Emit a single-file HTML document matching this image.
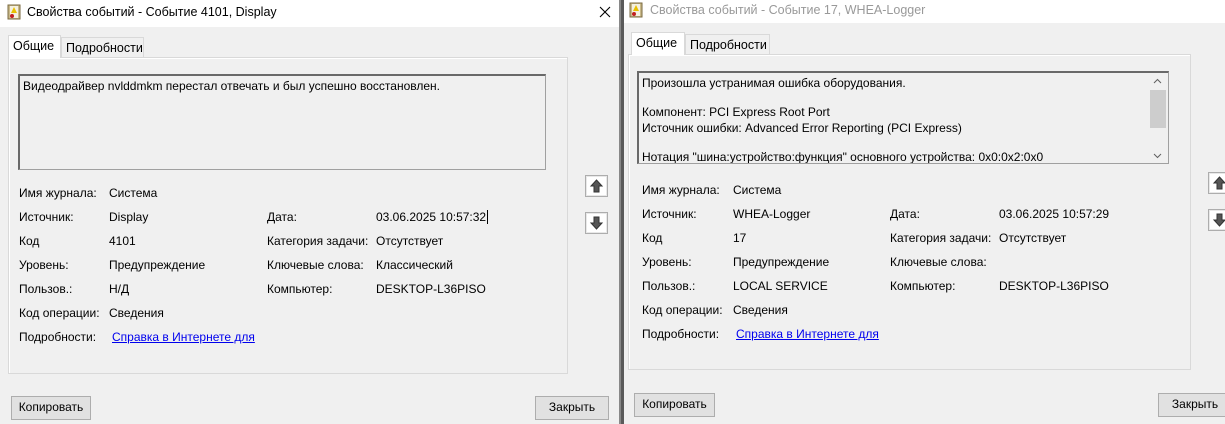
<!DOCTYPE html>
<html><head><meta charset="utf-8"><style>
*{margin:0;padding:0;box-sizing:border-box}
body{width:1225px;height:424px;overflow:hidden;background:#f0f0f0;position:relative;font-family:"Liberation Sans","DejaVu Sans",sans-serif;font-size:12px;color:#000}
.a{position:absolute;white-space:nowrap}
.tb{position:absolute;top:0;height:27px;background:#fff}
.tab{position:absolute;border:1px solid #d9d9d9;border-bottom:none;background:#f0f0f0;padding:3px 4px 0 4px;height:20px}
.tab.on{background:#fff;height:23px;z-index:2}
.panel{position:absolute;border:1px solid #d9d9d9;background:#f0f0f0;box-shadow:inset 1px 1px 0 #fff}
.box{position:absolute;border:1px solid #a0a0a0;border-top:2px solid #696969;border-left:2px solid #696969;background:#f0f0f0;padding:2px 3px;line-height:16px;overflow:hidden}
.btn{position:absolute;border:1px solid #adadad;background:#e1e1e1;text-align:center;line-height:20px}
.arr{position:absolute;width:23px;height:22px;border:1px solid #adadad;background:#fff;box-shadow:inset 0 0 0 1px #e8e8e8}
.link{color:#0000ee;text-decoration:underline}
.gap{height:13px}
</style></head><body>
<!-- left window -->
<div class="tb" style="left:0;width:619px"></div>
<svg class="a" style="left:7px;top:4px" width="14" height="16" viewBox="0 0 14 16"><rect x="1" y="1" width="12" height="14" fill="#c9b98a" stroke="#7a6a40"/><rect x="3" y="2" width="8" height="12" fill="#f4f0e0"/><path d="M7 3 L10 9 L4 9Z" fill="#e8c000"/><circle cx="5" cy="12" r="2" fill="#c02020"/></svg>
<div class="a" style="left:27px;top:5px;font-size:12.5px">Свойства событий - Событие 4101, Display</div>
<svg class="a" style="left:599px;top:6px" width="12" height="12"><path d="M1 1L11 11M11 1L1 11" stroke="#000" stroke-width="1.1"/></svg>
<div class="tab on" style="left:8px;top:35px;width:53px;font-size:12.5px">Общие</div>
<div class="tab" style="left:61px;top:37px;width:83px;font-size:12.5px">Подробности</div>
<div class="panel" style="left:8px;top:57px;width:560px;height:317px"></div>
<div class="box" style="left:18px;top:74px;width:528px;height:96px">Видеодрайвер nvlddmkm перестал отвечать и был успешно восстановлен.</div>
<div class="a" style="left:19px;top:186px">Имя журнала:</div><div class="a" style="left:109px;top:186px">Система</div>
<div class="a" style="left:19px;top:210px">Источник:</div><div class="a" style="left:109px;top:210px">Display</div>
<div class="a" style="left:267px;top:210px">Дата:</div><div class="a" style="left:376px;top:210px">03.06.2025 10:57:32<span style="border-left:1px solid #000;margin-left:1px"></span></div>
<div class="a" style="left:19px;top:234px">Код</div><div class="a" style="left:109px;top:234px">4101</div>
<div class="a" style="left:267px;top:234px">Категория задачи:</div><div class="a" style="left:376px;top:234px">Отсутствует</div>
<div class="a" style="left:19px;top:258px">Уровень:</div><div class="a" style="left:109px;top:258px">Предупреждение</div>
<div class="a" style="left:267px;top:258px">Ключевые слова:</div><div class="a" style="left:376px;top:258px">Классический</div>
<div class="a" style="left:19px;top:282px">Пользов.:</div><div class="a" style="left:109px;top:282px">Н/Д</div>
<div class="a" style="left:267px;top:282px">Компьютер:</div><div class="a" style="left:376px;top:282px">DESKTOP-L36PISO</div>
<div class="a" style="left:19px;top:306px">Код операции:</div><div class="a" style="left:109px;top:306px">Сведения</div>
<div class="a" style="left:19px;top:330px">Подробности:</div><div class="a link" style="left:112px;top:330px">Справка в Интернете для </div>
<div class="arr" style="left:585px;top:175px"><svg width="21" height="20"><path d="M10.5 4L16 10H13V16H8V10H5Z" fill="#555" stroke="#333"/></svg></div>
<div class="arr" style="left:585px;top:212px"><svg width="21" height="20"><path d="M10.5 16L16 10H13V4H8V10H5Z" fill="#555" stroke="#333"/></svg></div>
<div class="btn" style="left:11px;top:396px;width:80px;height:24px">Копировать</div>
<div class="btn" style="left:535px;top:396px;width:74px;height:24px">Закрыть</div>
<!-- divider -->
<div class="a" style="left:619px;top:0;width:2px;height:424px;background:#888"></div>
<div class="a" style="left:621px;top:0;width:3px;height:424px;background:#5a5a5a"></div>
<!-- right window -->
<div class="tb" style="left:624px;width:601px;height:23px"></div>
<svg class="a" style="left:629px;top:2px" width="14" height="16" viewBox="0 0 14 16"><rect x="1" y="1" width="12" height="14" fill="#c9b98a" stroke="#7a6a40"/><rect x="3" y="2" width="8" height="12" fill="#f4f0e0"/><path d="M7 3 L10 9 L4 9Z" fill="#e8c000"/><circle cx="5" cy="12" r="2" fill="#c02020"/></svg>
<div class="a" style="left:650px;top:3px;font-size:12.5px;color:#999">Свойства событий - Событие 17, WHEA-Logger</div>
<div class="tab on" style="left:631px;top:32px;width:54px;font-size:12.5px">Общие</div>
<div class="tab" style="left:685px;top:34px;width:85px;font-size:12.5px">Подробности</div>
<div class="panel" style="left:628px;top:54px;width:563px;height:316px"></div>
<div class="box" style="left:637px;top:71px;width:532px;height:93px;background:#f0f0f0;padding-top:2px">Произошла устранимая ошибка оборудования.<div class="gap"></div>Компонент: PCI Express Root Port<br>Источник ошибки: Advanced Error Reporting (PCI Express)<div class="gap"></div>Нотация "шина:устройство:функция" основного устройства: 0x0:0x2:0x0</div>
<div class="a" style="left:1150px;top:73px;width:16px;height:89px;background:#f0f0f0"></div>
<div class="a" style="left:1150px;top:90px;width:16px;height:38px;background:#cdcdcd"></div>
<svg class="a" style="left:1153px;top:78px" width="9" height="6"><path d="M1 5L4.5 1.5L8 5" stroke="#606060" fill="none"/></svg>
<svg class="a" style="left:1153px;top:153px" width="9" height="6"><path d="M1 1L4.5 4.5L8 1" stroke="#606060" fill="none"/></svg>
<div class="a" style="left:642px;top:183px">Имя журнала:</div><div class="a" style="left:733px;top:183px">Система</div>
<div class="a" style="left:642px;top:207px">Источник:</div><div class="a" style="left:733px;top:207px">WHEA-Logger</div>
<div class="a" style="left:890px;top:207px">Дата:</div><div class="a" style="left:999px;top:207px">03.06.2025 10:57:29</div>
<div class="a" style="left:642px;top:231px">Код</div><div class="a" style="left:733px;top:231px">17</div>
<div class="a" style="left:890px;top:231px">Категория задачи:</div><div class="a" style="left:999px;top:231px">Отсутствует</div>
<div class="a" style="left:642px;top:255px">Уровень:</div><div class="a" style="left:733px;top:255px">Предупреждение</div>
<div class="a" style="left:890px;top:255px">Ключевые слова:</div>
<div class="a" style="left:642px;top:279px">Пользов.:</div><div class="a" style="left:733px;top:279px">LOCAL SERVICE</div>
<div class="a" style="left:890px;top:279px">Компьютер:</div><div class="a" style="left:999px;top:279px">DESKTOP-L36PISO</div>
<div class="a" style="left:642px;top:303px">Код операции:</div><div class="a" style="left:733px;top:303px">Сведения</div>
<div class="a" style="left:642px;top:327px">Подробности:</div><div class="a link" style="left:736px;top:327px">Справка в Интернете для </div>
<div class="arr" style="left:1208px;top:172px"><svg width="21" height="20"><path d="M10.5 4L16 10H13V16H8V10H5Z" fill="#555" stroke="#333"/></svg></div>
<div class="arr" style="left:1208px;top:209px"><svg width="21" height="20"><path d="M10.5 16L16 10H13V4H8V10H5Z" fill="#555" stroke="#333"/></svg></div>
<div class="btn" style="left:634px;top:393px;width:81px;height:24px">Копировать</div>
<div class="btn" style="left:1158px;top:393px;width:74px;height:24px">Закрыть</div>
</body></html>
